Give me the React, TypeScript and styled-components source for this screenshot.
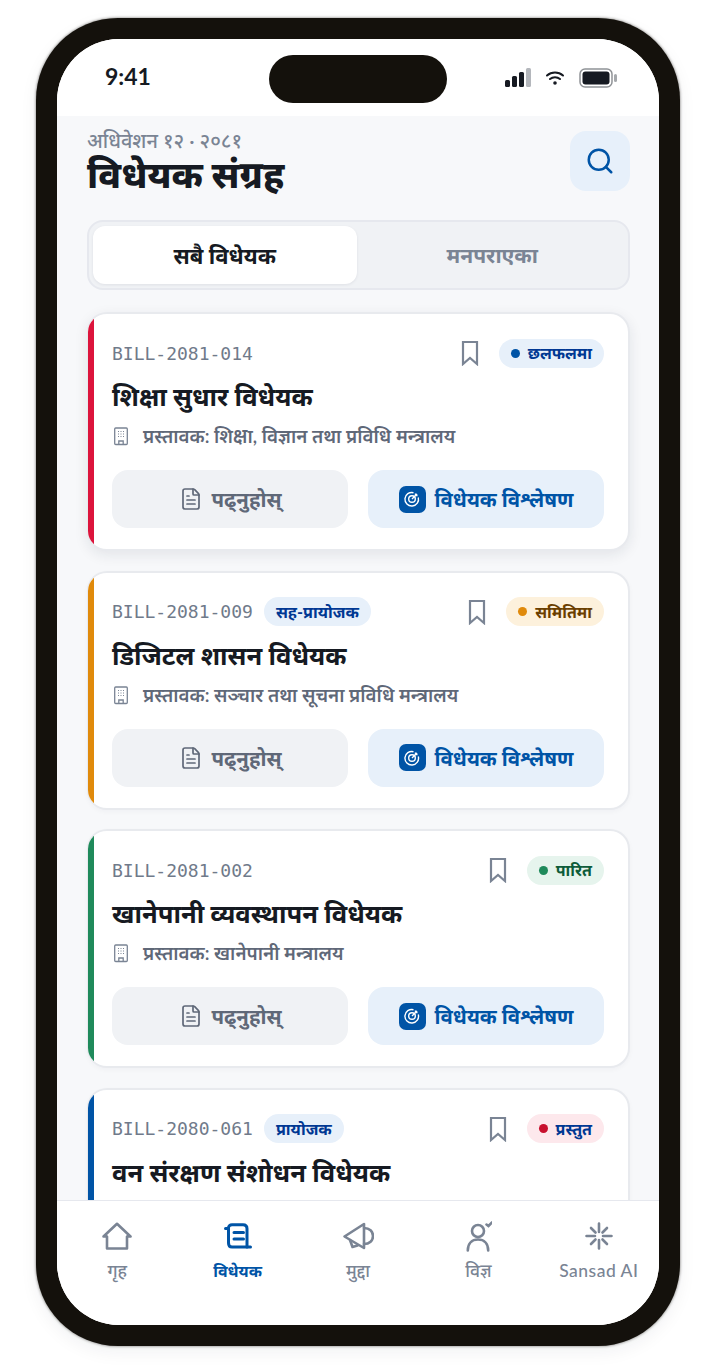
import { createGlobalStyle } from "styled-components";
import styled from "styled-components";
import { FileText, Search } from "lucide-react";

const GlobalStyle = createGlobalStyle`
  html, body {
    margin: 0;
    padding: 0;
    background: #ffffff;
  }
  * {
    box-sizing: border-box;
  }
  body {
    font-family: "Lato", "Noto Sans", sans-serif;
  }
`;

type Bill = {
  id: string;
  title: string;
  ministry?: string;
  accent: string;
  role?: string;
  status: string;
  statusBg: string;
  statusColor: string;
  dot: string;
};

const bills: Bill[] = [
  {
    id: "BILL-2081-014",
    title: "शिक्षा सुधार विधेयक",
    ministry: "प्रस्तावक: शिक्षा, विज्ञान तथा प्रविधि मन्त्रालय",
    accent: "#dc143c",
    status: "छलफलमा",
    statusBg: "#e7f0fa",
    statusColor: "#003893",
    dot: "#0054a6",
  },
  {
    id: "BILL-2081-009",
    title: "डिजिटल शासन विधेयक",
    ministry: "प्रस्तावक: सञ्चार तथा सूचना प्रविधि मन्त्रालय",
    accent: "#e08a0b",
    role: "सह-प्रायोजक",
    status: "समितिमा",
    statusBg: "#fdf1dc",
    statusColor: "#6b3f00",
    dot: "#e08a0b",
  },
  {
    id: "BILL-2081-002",
    title: "खानेपानी व्यवस्थापन विधेयक",
    ministry: "प्रस्तावक: खानेपानी मन्त्रालय",
    accent: "#1f8a5b",
    status: "पारित",
    statusBg: "#e6f4ed",
    statusColor: "#0e5c3a",
    dot: "#1f8a5b",
  },
  {
    id: "BILL-2080-061",
    title: "वन संरक्षण संशोधन विधेयक",
    accent: "#0054a6",
    role: "प्रायोजक",
    status: "प्रस्तुत",
    statusBg: "#fde8ec",
    statusColor: "#003893",
    dot: "#c8102e",
  },
];

const BookmarkIcon = () => (
  <svg width="18" height="26" viewBox="0 0 18 26" fill="none" stroke="#7a8494" strokeWidth="2.2">
    <path d="M2 2h14v22l-7-6-7 6z" />
  </svg>
);

const BuildingIcon = () => (
  <svg width="18" height="20" viewBox="0 0 18 20" fill="none" stroke="#7a8494" strokeWidth="1.3">
    <rect x="2.700" y="2" width="12.600" height="16.500" rx="1" />
    <path d="M6.800 18.500v-3.500h4.400v3.500" />
    <path d="M6 5.500h1M8.500 5.500h1M11 5.500h1M6 8h1M8.500 8h1M11 8h1M6 10.500h1M8.500 10.500h1M11 10.500h1" strokeWidth="1" />
  </svg>
);

const TargetIcon = () => (
  <svg width="18" height="18" viewBox="0 0 18 18" fill="none" stroke="#ffffff" strokeWidth="1.4">
    <path d="M10.500 2.700A6.800 6.800 0 1 0 15.300 7.500" />
    <circle cx="9" cy="9" r="3.300" />
    <path d="M9 9l5-5M12.500 3.500v2h2" />
  </svg>
);

const HomeIcon = () => (
  <svg width="30" height="28" viewBox="0 0 30 28" fill="none" stroke="#7a8494" strokeWidth="2.6" strokeLinejoin="round">
    <path d="M1.500 14.500 15 1.800l13.500 12.700H25v12H5v-12z" />
  </svg>
);

const ScrollIcon = () => (
  <svg width="28" height="26" viewBox="0 0 28 26" fill="none" stroke="#0054a6" strokeWidth="3" strokeLinecap="round" strokeLinejoin="round">
    <path d="M1.500 5.500h3V20c0 2.800 1.500 4 3.500 4h18.500" />
    <path d="M4.500 5c0-2 1.500-3.200 3.500-3.200h11c2.500 0 4 1.500 4 4V24" />
    <path d="M10 9.500h9.500M10 16h9.500" />
  </svg>
);

const MegaphoneIcon = () => (
  <svg width="32" height="30" viewBox="0 0 32 30" fill="none" stroke="#7a8494" strokeWidth="2.6" strokeLinecap="round" strokeLinejoin="round">
    <path d="M2.500 15.500 22 3v24z" />
    <path d="M22 7c5.500 0 9 3.500 9 8s-3.500 8-9 8" />
    <path d="M8 19l2.500 7 5-1.500" />
  </svg>
);

const PersonCheckIcon = () => (
  <svg width="28" height="31" viewBox="-2 0 28 31" fill="none" stroke="#7a8494" strokeWidth="2.600" strokeLinecap="round">
    <circle cx="12" cy="10" r="6" />
    <path d="M1.800 29.500C1.800 22.500 6 18.500 12 18.500S22.200 22.500 22.200 29.500" />
    <path d="M20.500 3.500l2 1.500 3.500-3.500" />
  </svg>
);

const SparkLoaderIcon = () => (
  <svg width="28" height="28" viewBox="0 0 28 28" fill="none" stroke="#7a8494" strokeWidth="2.600" strokeLinecap="round">
    <path d="M14 1.500v8.500M14 18v8.500M1.500 14h8.500M18 14h8.500" />
    <path d="M6 6l4.500 4.500M22 6l-4.500 4.500M6 22l4.500-4.500M22 22l-4.500-4.500" />
  </svg>
);

const BillCard = ({ bill, raised }: { bill: Bill; raised?: boolean }) => {
  return (
    <Card $raised={raised}>
      <AccentBar $accent={bill.accent} />
      <CardBody>
        <TopRow>
          <BillId>{bill.id}</BillId>
          {bill.role && <RoleTag>{bill.role}</RoleTag>}
          <TopSpacer />
          <BookmarkButton>
            <BookmarkIcon />
          </BookmarkButton>
          <StatusTag $bg={bill.statusBg} $color={bill.statusColor}>
            <StatusDot $color={bill.dot} />
            {bill.status}
          </StatusTag>
        </TopRow>
        <BillTitle>{bill.title}</BillTitle>
        {bill.ministry && (
          <>
            <MinistryRow>
              <BuildingIcon />
              {bill.ministry}
            </MinistryRow>
            <Actions>
              <ReadButton>
                <FileText size={24} strokeWidth={1.7} color="#5f6878" />
                पढ्नुहोस्
              </ReadButton>
              <AnalyzeButton>
                <TargetBadge>
                  <TargetIcon />
                </TargetBadge>
                विधेयक विश्लेषण
              </AnalyzeButton>
            </Actions>
          </>
        )}
      </CardBody>
    </Card>
  );
};

const App = () => {
  return (
    <>
      <GlobalStyle />
      <Page>
        <Phone>
          <Screen>
            <Island />
            <StatusBar>
              <Clock>9:41</Clock>
              <StatusIcons>
                <svg width="26" height="19" viewBox="0 0 26 19">
                  <rect x="0" y="12" width="5" height="7" rx="1.500" fill="#161a22" />
                  <rect x="7" y="8" width="5" height="11" rx="1.500" fill="#161a22" />
                  <rect x="14" y="4" width="5" height="15" rx="1.500" fill="#161a22" />
                  <rect x="21" y="0" width="5" height="19" rx="1.500" fill="#b4b7bc" />
                </svg>
                <svg width="20" height="16" viewBox="0 0 20 16" fill="none" stroke="#161a22" strokeWidth="2" strokeLinecap="round">
                  <path d="M2 5.500c4.500-4 11.500-4 16 0M5 9c2.800-2.400 7.200-2.400 10 0" />
                  <circle cx="10" cy="13" r="1.800" fill="#161a22" stroke="none" />
                </svg>
                <svg width="38" height="20" viewBox="0 0 38 20">
                  <rect x="1" y="1" width="32" height="18" rx="5" fill="none" stroke="#8f9296" strokeWidth="1.500" />
                  <rect x="3.500" y="3.500" width="27" height="13" rx="3" fill="#161a22" />
                  <rect x="35" y="6" width="3" height="8" rx="1.500" fill="#a5a8ac" />
                </svg>
              </StatusIcons>
            </StatusBar>
            <Content>
              <Header>
                <HeaderText>
                  <Kicker>अधिवेशन १२ · २०८१</Kicker>
                  <PageTitle>विधेयक संग्रह</PageTitle>
                </HeaderText>
                <SearchButton>
                  <Search size={30} strokeWidth={2} color="#0054a6" />
                </SearchButton>
              </Header>
              <Tabs>
                <Tab $active>सबै विधेयक</Tab>
                <Tab>मनपराएका</Tab>
              </Tabs>
              <CardList>
                {bills.map((bill, i) => (
                  <BillCard key={bill.id} bill={bill} raised={i === 0} />
                ))}
              </CardList>
            </Content>
            <TabBar>
              <NavItem>
                <NavIcon>
                  <HomeIcon />
                </NavIcon>
                <NavLabel>गृह</NavLabel>
              </NavItem>
              <NavItem>
                <NavIcon>
                  <ScrollIcon />
                </NavIcon>
                <NavLabel $active>विधेयक</NavLabel>
              </NavItem>
              <NavItem>
                <NavIcon>
                  <MegaphoneIcon />
                </NavIcon>
                <NavLabel>मुद्दा</NavLabel>
              </NavItem>
              <NavItem>
                <NavIcon>
                  <PersonCheckIcon />
                </NavIcon>
                <NavLabel>विज्ञ</NavLabel>
              </NavItem>
              <NavItem>
                <NavIcon>
                  <SparkLoaderIcon />
                </NavIcon>
                <NavLabel $latin>Sansad AI</NavLabel>
              </NavItem>
            </TabBar>
          </Screen>
        </Phone>
      </Page>
    </>
  );
};

const Page = styled.div`
  width: 704px;
  height: 1370px;
  padding: 18px 24px 24px 36px;
  overflow: hidden;
`;

const Phone = styled.div`
  width: 644px;
  height: 1328px;
  padding: 21px;
  border-radius: 82px;
  background: #14110c;
  box-shadow: 0 0 3px 0 rgba(20, 17, 12, 0.6), 0 6px 18px rgba(20, 30, 50, 0.06);
`;

const Screen = styled.div`
  position: relative;
  display: flex;
  flex-direction: column;
  height: 100%;
  border-radius: 62px;
  background: #ffffff;
  overflow: hidden;
`;

const Island = styled.div`
  position: absolute;
  top: 16px;
  left: 212px;
  width: 178px;
  height: 48px;
  border-radius: 24px;
  background: #14110c;
`;

const StatusBar = styled.div`
  flex: none;
  display: flex;
  justify-content: space-between;
  align-items: center;
  height: 77px;
  padding: 0 42px 0 48px;
  background: #ffffff;
`;

const Clock = styled.div`
  padding-bottom: 4px;
  font-size: 23px;
  font-weight: 700;
  color: #161a22;
`;

const StatusIcons = styled.div`
  display: flex;
  align-items: center;
  gap: 14px;
`;

const Content = styled.div`
  flex: 1;
  min-height: 0;
  padding: 14px 29px 0 30px;
  background: #f7f8fa;
  overflow: hidden;
`;

const Header = styled.div`
  display: flex;
  justify-content: space-between;
  align-items: flex-start;
`;

const HeaderText = styled.div`
  display: flex;
  flex-direction: column;
`;

const Kicker = styled.div`
  font-size: 20px;
  line-height: 20px;
  font-weight: 500;
  color: #7a8494;
`;

const PageTitle = styled.h1`
  margin: 0;
  font-size: 37px;
  line-height: 48px;
  font-weight: 800;
  color: #161a22;
`;

const SearchButton = styled.div`
  display: flex;
  align-items: center;
  justify-content: center;
  width: 60px;
  height: 60px;
  margin-top: 1px;
  border-radius: 16px;
  background: #e7f0fa;
`;

const Tabs = styled.div`
  display: flex;
  gap: 4px;
  height: 70px;
  margin-top: 22px;
  padding: 4px;
  border: 2px solid #e6e8ee;
  border-radius: 16px;
  background: #f0f2f5;
`;

const Tab = styled.div<{ $active?: boolean }>`
  flex: 1;
  display: flex;
  align-items: center;
  justify-content: center;
  border-radius: 12px;
  font-size: ${(p) => (p.$active ? "22px" : "21px")};
  font-weight: 700;
  color: ${(p) => (p.$active ? "#161a22" : "#7a8494")};
  background: ${(p) => (p.$active ? "#ffffff" : "transparent")};
  box-shadow: ${(p) => (p.$active ? "0 1px 3px rgba(20, 30, 50, 0.08)" : "none")};
`;

const CardList = styled.div`
  display: flex;
  flex-direction: column;
  gap: 19.500px;
  margin-top: 22px;
`;

const Card = styled.div<{ $raised?: boolean }>`
  flex: none;
  display: flex;
  width: 543px;
  height: 239px;
  border: 2px solid #e8eaee;
  border-left-width: 1px;
  border-radius: 20px;
  background: #ffffff;
  overflow: hidden;
  box-shadow: ${(p) =>
    p.$raised ? "0 4px 14px rgba(20, 30, 50, 0.09)" : "0 2px 5px rgba(20, 30, 50, 0.03)"};
`;

const AccentBar = styled.div<{ $accent: string }>`
  flex: none;
  width: 6px;
  background: ${(p) => p.$accent};
`;

const CardBody = styled.div`
  flex: 1;
  min-width: 0;
  padding: 24px 24px 0 18px;
`;

const TopRow = styled.div`
  display: flex;
  align-items: center;
  height: 30px;
  gap: 11px;
`;

const BillId = styled.div`
  font-family: "DejaVu Sans Mono", monospace;
  font-size: 18px;
  font-weight: 400;
  color: #707a8a;
`;

const RoleTag = styled.div`
  padding: 0 12px;
  height: 29px;
  display: flex;
  align-items: center;
  border-radius: 15px;
  font-size: 16.200px;
  font-weight: 700;
  color: #003893;
  background: #e7f0fa;
`;

const TopSpacer = styled.div`
  flex: 1;
`;

const BookmarkButton = styled.div`
  display: flex;
  margin-right: 9px;
`;

const StatusTag = styled.div<{ $bg: string; $color: string }>`
  display: flex;
  align-items: center;
  gap: 8px;
  height: 29px;
  padding: 0 12px;
  border-radius: 15px;
  font-size: 16px;
  font-weight: 700;
  color: ${(p) => p.$color};
  background: ${(p) => p.$bg};
`;

const StatusDot = styled.span<{ $color: string }>`
  width: 9px;
  height: 9px;
  border-radius: 50%;
  background: ${(p) => p.$color};
`;

const BillTitle = styled.div`
  margin-top: 9px;
  font-size: 25.600px;
  line-height: 38px;
  font-weight: 700;
  color: #161a22;
`;

const MinistryRow = styled.div`
  display: flex;
  align-items: center;
  gap: 13px;
  margin-top: 7px;
  height: 28px;
  font-size: 18.800px;
  font-weight: 600;
  color: #5f6878;
`;

const Actions = styled.div`
  display: grid;
  grid-template-columns: 1fr 1fr;
  gap: 20px;
  margin-top: 20px;
`;

const ReadButton = styled.div`
  display: flex;
  align-items: center;
  justify-content: center;
  gap: 9px;
  height: 58px;
  border-radius: 16px;
  font-size: 20.400px;
  font-weight: 700;
  color: #5f6878;
  background: #f0f2f5;
`;

const AnalyzeButton = styled(ReadButton)`
  color: #0054a6;
  background: #e7f0fa;
`;

const TargetBadge = styled.span`
  display: flex;
  align-items: center;
  justify-content: center;
  width: 27px;
  height: 27px;
  border-radius: 7px;
  background: #0054a6;
`;

const TabBar = styled.div`
  position: relative;
  flex: none;
  display: grid;
  grid-template-columns: repeat(5, 1fr);
  height: 125px;
  padding-top: 18px;
  border-top: 1px solid #e6e8ee;
  background: #ffffff;
`;

const NavItem = styled.div`
  display: flex;
  flex-direction: column;
  align-items: center;
  gap: 6px;
`;

const NavIcon = styled.div`
  display: flex;
  align-items: center;
  justify-content: center;
  height: 34px;
`;

const NavLabel = styled.div<{ $active?: boolean; $latin?: boolean }>`
  font-size: ${(p) => (p.$active ? "16px" : "17.500px")};
  line-height: 24px;
  font-weight: ${(p) => (p.$active ? 700 : 500)};
  letter-spacing: ${(p) => (p.$latin ? "0.5px" : "0")};
  color: ${(p) => (p.$active ? "#0054a6" : "#7a8494")};
`;

export default App;
